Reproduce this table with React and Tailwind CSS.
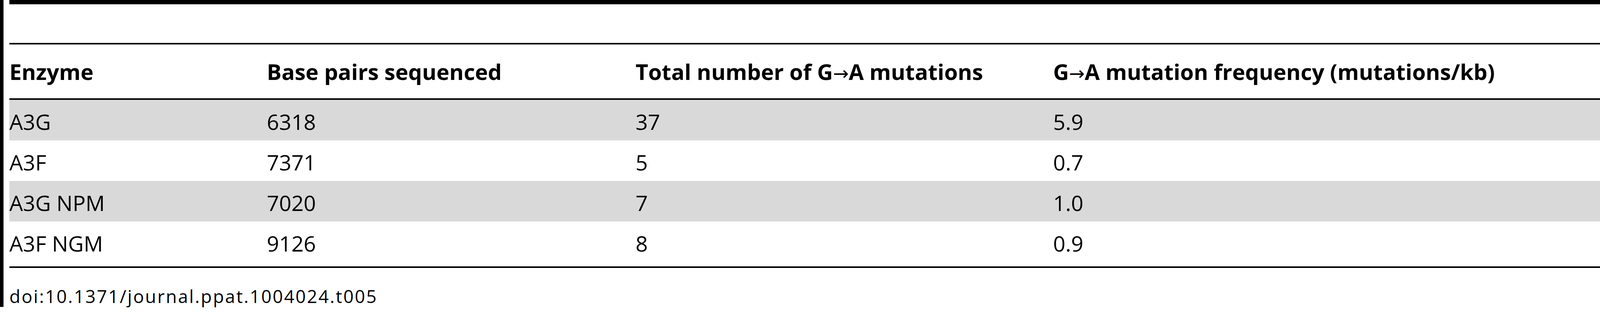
import React from "react";

const rows = [
  { enzyme: "A3G", bp: "6318", total: "37", freq: "5.9", shaded: true },
  { enzyme: "A3F", bp: "7371", total: "5", freq: "0.7", shaded: false },
  { enzyme: "A3G NPM", bp: "7020", total: "7", freq: "1.0", shaded: true },
  { enzyme: "A3F NGM", bp: "9126", total: "8", freq: "0.9", shaded: false },
];

const cols = "grid grid-cols-[659px_944px_1069px_1fr]";

const Arrow = () => <span className="font-normal text-[48px]">→</span>;

export default function App() {
  return (
    <div
      className="flex w-[4134px] h-[800px] bg-white text-black"
      style={{ fontFamily: '"Open Sans", "DejaVu Sans", sans-serif' }}
    >
      {/* left rule */}
      <div className="w-[9px] h-[787px] bg-black shrink-0" />

      <div className="flex flex-col flex-1 ml-[15px]">
        <div className="h-[11px] bg-black" />
        <div className="h-[99px]" />
        <div className="h-[4px] bg-black" />

        {/* header */}
        <div className={`${cols} h-[138px] items-center font-bold text-[56px] leading-normal`}>
          <div>Enzyme</div>
          <div>Base pairs sequenced</div>
          <div>
            Total number of G<Arrow />A mutations
          </div>
          <div>
            G<Arrow />A mutation frequency (mutations/kb)
          </div>
        </div>
        <div className="h-[4px] bg-black" />

        {/* body */}
        {rows.map((r, i) => (
          <div
            key={r.enzyme}
            className={`${cols} items-start text-[55px] leading-normal ${
              r.shaded ? "bg-[#d9d9d9]" : "bg-white"
            } ${i === rows.length - 1 ? "h-[115px]" : "h-[104px]"}`}
          >
            <div className="pt-[15px]">{r.enzyme}</div>
            <div className="pt-[15px]">{r.bp}</div>
            <div className="pt-[15px]">{r.total}</div>
            <div className="pt-[15px]">{r.freq}</div>
          </div>
        ))}
        <div className="h-[4px] bg-black" />

        <div className="pt-[38px] text-[46px] leading-normal tracking-[3px]">
          doi:10.1371/journal.ppat.1004024.t005
        </div>
      </div>
    </div>
  );
}
